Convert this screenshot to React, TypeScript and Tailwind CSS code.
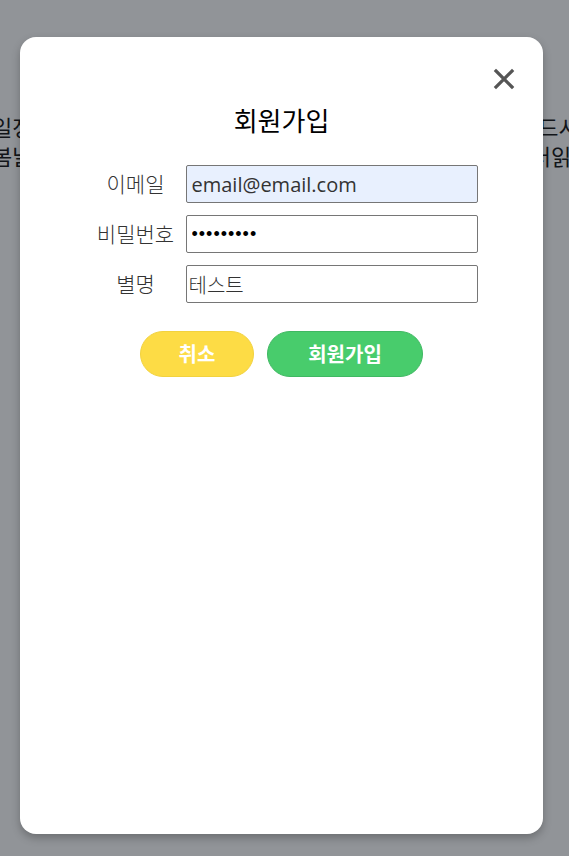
import { useState } from 'react';

function CloseIcon() {
  return (
    <svg width="22" height="22" viewBox="0 0 22 22" fill="none">
      <path d="M3 3 L19 19 M19 3 L3 19" stroke="#555" strokeWidth="3.2" strokeLinecap="square" />
    </svg>
  );
}

const kr = { fontFamily: '"Noto Sans CJK KR", "Noto Sans", sans-serif' };

export default function App() {
  const [email, setEmail] = useState('email@email.com');
  const [password, setPassword] = useState('123456789');
  const [nickname, setNickname] = useState('테스트');

  return (
    <div className="relative h-[856px] w-[569px] overflow-hidden bg-white" style={kr}>
      {/* page behind the overlay */}
      <div className="flex flex-col pt-[112px] text-[22px] leading-[29px] text-black whitespace-nowrap">
        <div className="flex justify-between">
          <span className="-ml-[8px]">일정</span>
          <span className="-mr-[30px]">드시는</span>
        </div>
        <div className="flex justify-between">
          <span className="-ml-[8px]">봄날</span>
          <span className="-mr-[30px]">[더읽기]</span>
        </div>
      </div>

      {/* overlay */}
      <div className="absolute inset-0 flex bg-[rgba(36,41,49,0.5)] pl-[20px] pt-[37px]">
        <div className="relative h-[797px] w-[523px] rounded-[16px] bg-white shadow-[0_4px_8px_rgba(0,0,0,0.25)]">
          <button className="absolute right-[28px] top-[31px] flex items-center justify-center">
            <CloseIcon />
          </button>

          <div className="flex flex-col items-center pt-[64px]">
            <h2 className="text-[26px] font-normal leading-[38px] text-black">회원가입</h2>

            <form className="mt-[26px] flex flex-col gap-[12px]">
              <div className="flex items-center">
                <label className="w-[100px] text-center text-[21px] font-light text-[#333]">이메일</label>
                <input
                  type="email"
                  value={email}
                  onChange={(e) => setEmail(e.target.value)}
                  className="h-[38px] w-[292px] rounded-[2px] border border-[#767676] bg-[#e8f0fe] px-[5px] text-[20px] text-[#333] outline-none"
                  style={{ fontFamily: '"Open Sans", sans-serif' }}
                />
              </div>
              <div className="flex items-center">
                <label className="w-[100px] text-center text-[21px] font-light text-[#333]">비밀번호</label>
                <input
                  type="password"
                  value={password}
                  onChange={(e) => setPassword(e.target.value)}
                  className="h-[38px] w-[292px] rounded-[2px] border border-[#767676] bg-white px-[5px] text-[18px] tracking-[1px] text-black outline-none"
                  style={{ fontFamily: '"Liberation Sans", sans-serif' }}
                />
              </div>
              <div className="flex items-center">
                <label className="w-[100px] text-center text-[21px] font-light text-[#333]">별명</label>
                <input
                  type="text"
                  value={nickname}
                  onChange={(e) => setNickname(e.target.value)}
                  className="h-[38px] w-[292px] rounded-[2px] border border-[#767676] bg-white px-[2px] text-[20px] font-light text-[#333] outline-none"
                />
              </div>
            </form>

            <div className="mt-[28px] flex gap-[13px]">
              <button className="h-[46px] w-[114px] rounded-full border border-[#f2d23e] bg-[#fddc45] text-[20px] font-bold text-white">
                취소
              </button>
              <button className="h-[46px] w-[156px] rounded-full border border-[#3fb862] bg-[#48cc6c] text-[20px] font-bold text-white">
                회원가입
              </button>
            </div>
          </div>
        </div>
      </div>
    </div>
  );
}
